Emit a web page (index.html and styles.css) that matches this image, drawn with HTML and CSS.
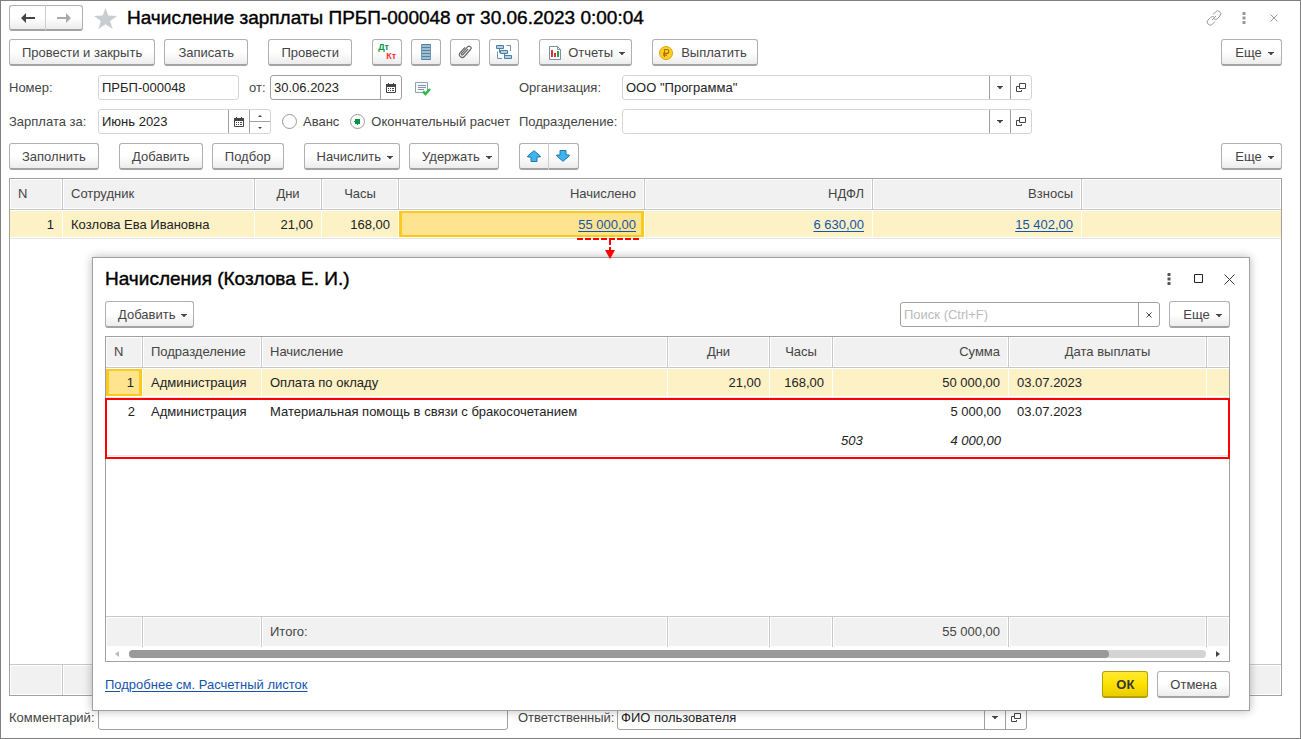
FILE: index.html
```html
<!DOCTYPE html>
<html lang="ru">
<head>
<meta charset="utf-8">
<title>Начисление зарплаты</title>
<link rel="stylesheet" href="styles.css">
</head>
<body>
<svg class="defs" aria-hidden="true">
  <symbol id="caret" viewBox="0 0 6 4"><path d="M0 0h6v1H5L3.500 3h-1L1 1H0z" fill="#444"/></symbol>
  <symbol id="open" viewBox="0 0 10 10"><path d="M3.500.5h6v5h-6zM3 3.500H.5v5h5V7" fill="none" stroke="#444"/></symbol>
  <symbol id="calendar" viewBox="0 0 10 10"><path d="M.5 1.500h9v8h-9z" fill="#fff" stroke="#444"/><path d="M0 1h10v3H0zM2 0h1v2H2zM7 0h1v2H7zM2 5h1v1H2zM4 5h1v1H4zM6 5h2v1H6zM2 7h1v1H2zM4 7h1v1H4zM6 7h2v1H6z" fill="#444"/></symbol>
  <symbol id="dots" viewBox="0 0 4 12"><path d="M.5 0h3v3h-3zM.5 4.500h3v3h-3zM.5 9h3v3h-3z" fill="currentColor"/></symbol>
</svg>

<main class="page">
  <header class="titlebar">
    <div class="pair">
      <button class="btn" aria-label="Назад"><svg width="14" height="10" viewBox="0 0 14 10"><path d="M5 0v4h9v2H5v4L0 5z" fill="#444"/></svg></button>
      <button class="btn" aria-label="Вперед"><svg width="14" height="10" viewBox="0 0 14 10"><path d="M9 0v4H0v2h9v4l5-5z" fill="#aaa"/></svg></button>
    </div>
    <svg class="star" width="23" height="21" viewBox="0 0 23 21"><path d="M11.500 0l2.800 7.600 8.700.3-6.900 5 2.600 8.100-7.200-4.800L4.300 21l2.600-8.100L0 7.900l8.700-.3z" fill="#c9ccd0"/></svg>
    <h1 class="title">Начисление зарплаты ПРБП-000048 от 30.06.2023 0:00:04</h1>
    <div class="winctl muted">
      <button class="plain link" aria-label="Ссылка"><svg width="16" height="16" viewBox="0 0 16 16" fill="none" stroke="#999"><path d="M7 4.500l2.500-2.600a2.900 2.900 0 0 1 4.500 4L11.500 8.600 9.800 9.500 8 9M9 11.500l-2.500 2.600a2.900 2.900 0 0 1-4.500-4L4.500 7.400 6.200 6.500 8 7M6 10l4-4"/></svg></button>
      <button class="plain" aria-label="Меню"><svg width="4" height="12"><use href="#dots"/></svg></button>
      <button class="plain" aria-label="Закрыть"><svg width="8" height="8" viewBox="0 0 8 8"><path d="M.5.5l7 7m0-7l-7 7" stroke="#999"/></svg></button>
    </div>
  </header>

  <div class="toolbar">
    <div class="group"><button class="btn">Провести и закрыть</button><button class="btn wide">Записать</button></div>
    <button class="btn wide">Провести</button>
    <div class="group">
      <button class="btn icon" aria-label="Проводки"><span class="dtkt"><span class="dt">Дт</span><span class="kt">Кт</span></span></button>
      <button class="btn icon" aria-label="Список"><svg width="12" height="16" viewBox="0 0 12 16"><path d="M1 0h10v16H1z" fill="#9dbdd2"/><path d="M1 .5h10M1 3.500h10M1 6.500h10M1 9.500h10M1 12.500h10M1 15.500h10" stroke="#54819f"/><path d="M1.500 0v16M10.500 0v16" stroke="#6f98b2"/></svg></button>
      <button class="btn icon" aria-label="Файлы"><svg width="14" height="14" viewBox="0 0 14 14" fill="none" stroke="#666" stroke-width="1.200"><path d="M10 4L5 9.500c-.9 1-2.200-.1-1.300-1.200l5.800-6.400c1.800-1.900 4.800.3 3 2.600L6.400 11.500c-2.300 2.500-6.600-.4-4.400-3.600L7 2.300"/></svg></button>
      <button class="btn icon" aria-label="Структура"><svg width="16" height="16" viewBox="0 0 16 16"><path d="M10.500 1.500h4V7M1.500 7.500v7H6" fill="none" stroke="#6b93b0"/><path d="M3.500 5v3.500H5M8.500 10v3H10" fill="none" stroke="#4a7fa5"/><path d="M.5 1.500h7v3h-7zM4.500 6.500h7v3h-7zM8.500 11.500h7v3h-7z" fill="#b5d0e2" stroke="#4a7fa5"/></svg></button>
    </div>
    <button class="btn drop reports"><svg width="14" height="14" viewBox="0 0 14 14"><path d="M1.500.5h8l3 3v10h-11z" fill="#fff" stroke="#7d8fa3"/><path d="M9.500.5v3h3" fill="none" stroke="#7d8fa3"/><path d="M3 4h2v7H3z" fill="#d33"/><path d="M6 7h2v4H6z" fill="#d33"/><path d="M9 5h2v6H9z" fill="#2c9b49"/></svg><span>Отчеты</span><svg class="caret" width="6" height="4"><use href="#caret"/></svg></button>
    <button class="btn pay"><svg width="14" height="14" viewBox="0 0 14 14"><circle cx="7" cy="7" r="6.500" fill="#ffcf26" stroke="#dba408"/><path d="M5.500 11V3.500h2.300a1.900 1.900 0 0 1 0 3.900H4M4 9.200h4" fill="none" stroke="#a87500" stroke-width="1.200"/></svg><span>Выплатить</span></button>
    <button class="btn drop end"><span>Еще</span><svg class="caret" width="6" height="4"><use href="#caret"/></svg></button>
  </div>

  <div class="row">
    <div class="left">
      <label class="lbl" for="num">Номер:</label>
      <div class="field w-num"><input id="num" value="ПРБП-000048"></div>
      <label class="lbl-date" for="date">от:</label>
      <div class="field dark w-date"><input id="date" value="30.06.2023"><button aria-label="Календарь"><svg width="10" height="10"><use href="#calendar"/></svg></button></div>
      <svg class="note" width="16" height="14" viewBox="0 0 16 14"><path d="M.5.5h12v10H.5z" fill="#f4f8fb" stroke="#8da2b3"/><path d="M3 3.500h8M3 5.500h8M3 7.500h6" stroke="#8596a3"/><path d="M8 9.500l2.500 2.500L15 7" fill="none" stroke="#2fb944" stroke-width="2.500"/></svg>
    </div>
    <label class="lbl-right" for="org">Организация:</label>
    <div class="field w-ref"><input id="org" value='ООО "Программа"'><button aria-label="Выбрать"><svg width="6" height="4"><use href="#caret"/></svg></button><button aria-label="Открыть"><svg width="10" height="10"><use href="#open"/></svg></button></div>
  </div>

  <div class="row">
    <div class="left">
      <label class="lbl" for="month">Зарплата за:</label>
      <div class="field w-month"><input id="month" value="Июнь 2023"><button aria-label="Календарь"><svg width="10" height="10"><use href="#calendar"/></svg></button>
        <div class="spin"><button aria-label="Больше"><svg width="4" height="2" viewBox="0 0 4 2"><path d="M2 0l2 2H0z" fill="#444"/></svg></button><button aria-label="Меньше"><svg width="4" height="2" viewBox="0 0 4 2"><path d="M0 0h4L2 2z" fill="#444"/></svg></button></div></div>
      <label class="radio"><input type="radio" name="kind">Аванс</label>
      <label class="radio"><input type="radio" name="kind" checked>Окончательный расчет</label>
    </div>
    <label class="lbl-right" for="dep">Подразделение:</label>
    <div class="field w-ref"><input id="dep"><button aria-label="Выбрать"><svg width="6" height="4"><use href="#caret"/></svg></button><button aria-label="Открыть"><svg width="10" height="10"><use href="#open"/></svg></button></div>
  </div>

  <div class="toolbar">
    <button class="btn">Заполнить</button>
    <div class="group"><button class="btn wide">Добавить</button><button class="btn">Подбор</button></div>
    <div class="group"><button class="btn drop"><span>Начислить</span><svg class="caret" width="6" height="4"><use href="#caret"/></svg></button><button class="btn drop"><span>Удержать</span><svg class="caret" width="6" height="4"><use href="#caret"/></svg></button></div>
    <div class="pair arrows">
      <button class="btn" aria-label="Вверх"><svg width="14" height="12" viewBox="0 0 14 12"><path d="M7 .7L13.300 6v1H10v4.500H4V7H.7V6z" fill="#41b3ee" stroke="#2379a8"/></svg></button>
      <button class="btn" aria-label="Вниз"><svg width="14" height="12" viewBox="0 0 14 12"><path d="M7 11.300L.7 6V5H4V.5h6V5h3.300v1z" fill="#41b3ee" stroke="#2379a8"/></svg></button>
    </div>
    <button class="btn drop end"><span>Еще</span><svg class="caret" width="6" height="4"><use href="#caret"/></svg></button>
  </div>

  <div class="gridbox main-grid">
    <table>
      <colgroup><col class="m1"><col class="m2"><col class="m3"><col class="m4"><col class="m5"><col class="m6"><col class="m7"><col></colgroup>
      <thead><tr><th>N</th><th>Сотрудник</th><th class="c">Дни</th><th class="c">Часы</th><th class="r">Начислено</th><th class="r">НДФЛ</th><th class="r">Взносы</th><th></th></tr></thead>
      <tbody>
        <tr class="sel"><td class="r">1</td><td>Козлова Ева Ивановна</td><td class="r">21,00</td><td class="r">168,00</td>
          <td class="r cur"><a href="#accruals">55 000,00</a><svg class="pointer" width="62" height="22" viewBox="0 0 62 22"><path d="M0 1h62" stroke="#f00" stroke-width="2" stroke-dasharray="6 2"/><path d="M33 2v12" stroke="#f00" stroke-width="2" stroke-dasharray="5 2"/><path d="M28 12h10l-5 9z" fill="#f00"/></svg></td>
          <td class="r"><a href="#tax">6 630,00</a></td><td class="r"><a href="#fees">15 402,00</a></td><td></td></tr>
        <tr class="fill"><td colspan="8"></td></tr>
      </tbody>
      <tfoot><tr><td></td><td></td><td></td><td></td><td></td><td></td><td></td><td></td></tr></tfoot>
    </table>
  </div>

  <div class="row bottom">
    <div class="left">
      <label class="lbl" for="comment">Комментарий:</label>
      <div class="field dark w-comment"><input id="comment"></div>
    </div>
    <label class="lbl-resp" for="resp">Ответственный:</label>
    <div class="field dark w-ref"><input id="resp" value="ФИО пользователя"><button aria-label="Выбрать"><svg width="6" height="4"><use href="#caret"/></svg></button><button aria-label="Открыть"><svg width="10" height="10"><use href="#open"/></svg></button></div>
  </div>

  <section class="dialog" id="accruals" role="dialog" aria-labelledby="dlg-title">
    <header class="dlg-head">
      <h2 class="title" id="dlg-title">Начисления (Козлова Е. И.)</h2>
      <div class="winctl">
        <button class="plain" aria-label="Меню"><svg width="4" height="12"><use href="#dots"/></svg></button>
        <button class="plain" aria-label="Развернуть"><svg width="10" height="10" viewBox="0 0 10 10"><path d="M.5.5h8v8h-8z" fill="none" stroke="#222"/></svg></button>
        <button class="plain" aria-label="Закрыть"><svg width="11" height="11" viewBox="0 0 11 11"><path d="M.5.5l10 10m0-10l-10 10" stroke="#333"/></svg></button>
      </div>
    </header>
    <div class="toolbar dlg-tools">
      <button class="btn drop"><span>Добавить</span><svg class="caret" width="6" height="4"><use href="#caret"/></svg></button>
      <div class="group end">
        <div class="field dark search"><input type="text" aria-label="Поиск" placeholder="Поиск (Ctrl+F)"><button aria-label="Очистить"><svg width="6" height="6" viewBox="0 0 6 6"><path d="M.5.5l5 5m0-5l-5 5" stroke="#444"/></svg></button></div>
        <button class="btn drop"><span>Еще</span><svg class="caret" width="6" height="4"><use href="#caret"/></svg></button>
      </div>
    </div>
    <div class="gridbox dlg-grid">
      <table>
        <colgroup><col class="d1"><col class="d2"><col><col class="d4"><col class="d5"><col class="d6"><col class="d7"><col class="d8"></colgroup>
        <thead><tr><th>N</th><th>Подразделение</th><th>Начисление</th><th class="c">Дни</th><th class="c">Часы</th><th class="r">Сумма</th><th class="c">Дата выплаты</th><th></th></tr></thead>
        <tbody>
          <tr class="sel"><td class="r cur">1</td><td>Администрация</td><td>Оплата по окладу</td><td class="r">21,00</td><td class="r">168,00</td><td class="r">50 000,00</td><td>03.07.2023</td><td></td></tr>
          <tr class="top"><td class="r">2</td><td>Администрация</td><td>Материальная помощь в связи с бракосочетанием</td><td></td><td></td><td class="r">5 000,00</td><td>03.07.2023</td><td></td></tr>
          <tr class="sub"><td></td><td></td><td></td><td></td><td></td><td><div class="split"><span>503</span><span>4 000,00</span></div></td><td></td><td></td></tr>
          <tr class="fill"><td colspan="8"></td></tr>
        </tbody>
        <tfoot><tr><td></td><td></td><td>Итого:</td><td></td><td></td><td class="r">55 000,00</td><td></td><td></td></tr></tfoot>
      </table>
      <div class="scroll">
        <svg width="4" height="6" viewBox="0 0 4 6"><path d="M4 0v6L0 3z" fill="#bbb"/></svg>
        <div class="track"><div class="thumb"></div></div>
        <svg width="4" height="6" viewBox="0 0 4 6"><path d="M0 0v6l4-3z" fill="#444"/></svg>
      </div>
      <div class="frame"></div>
    </div>
    <footer class="dlg-foot">
      <a href="#slip">Подробнее см. Расчетный листок</a>
      <div class="group"><button class="btn ok">ОК</button><button class="btn">Отмена</button></div>
    </footer>
  </section>
</main>
</body>
</html>
```
FILE: styles.css
```css
* { box-sizing: border-box; }
body { margin: 0; font: 13px/16px "Liberation Sans", Arial, sans-serif; color: #444; background: #fff; }
.defs { display: none; }
button, input { font: inherit; color: inherit; margin: 0; }
svg { display: block; flex: none; }
a { color: #1553ad; text-decoration: underline; text-underline-offset: 2px; }

.page { position: relative; display: flex; flex-direction: column; min-height: 100vh; border: 1px solid #808080; padding: 4px 18px 8px 8px; }

.titlebar { display: flex; align-items: center; height: 26px; margin-bottom: 8px; }
.title { margin: 0; font-size: 19px; line-height: 24px; font-weight: 400; color: #000; -webkit-text-stroke: 0.4px #000; white-space: nowrap; }
.star { margin: 0 10px 0 11px; }
.winctl { display: flex; align-items: center; gap: 20px; margin-left: auto; color: #555; }
.muted { color: #999; padding-right: 3px; }
.plain { border: 0; background: none; padding: 0; display: flex; justify-content: center; min-width: 10px; }
.link { margin-right: -3px; }

.btn { display: inline-flex; align-items: center; justify-content: center; height: 27px; padding: 1px 12px 0; border: 1px solid #b0b0b0; border-bottom: 2px solid #a3a3a3; border-radius: 3px; background: linear-gradient(#fff 50%, #ececec); white-space: nowrap; }
.wide { min-width: 84px; }
.drop { padding: 1px 6px 0 12px; gap: 6px; min-width: 61px; }
.caret { margin-top: 2px; }
.icon { width: 30px; padding: 0; }
.reports { padding-left: 8px; }
.pay { padding: 1px 10px 0 6px; gap: 8px; }
.ok { min-width: 46px; color: #333; font-weight: 700; border-color: #b5a000; background: linear-gradient(#ffe934, #ffe100 50%, #e8cd00); }
.pair { display: flex; }
.pair .btn { width: 37px; padding: 0; height: 26px; }
.pair .btn:first-child { border-radius: 3px 0 0 3px; border-right-color: #ccc; }
.pair .btn:last-child { border-radius: 0 3px 3px 0; border-left: 0; }
.arrows .btn { width: 30px; height: 27px; }
.dtkt { display: flex; flex-direction: column; width: 18px; font-size: 9px; line-height: 9px; font-weight: 700; }
.dt { text-align: left; color: #009646; }
.kt { text-align: right; color: #e33; }

.toolbar { display: flex; align-items: center; gap: 20px; }
.group { display: flex; align-items: center; gap: 9px; }
.end { margin-left: auto; }

.row { display: flex; align-items: center; margin-top: 9px; }
.row + .toolbar { margin-top: 9px; }
.left { display: flex; align-items: center; width: 510px; flex: none; }
.lbl { width: 89px; flex: none; }
.lbl-date { width: 31px; padding-left: 10px; }
.lbl-right { width: 103px; flex: none; }
.lbl-resp { width: 99px; flex: none; }
.field { display: flex; height: 25px; border: 1px solid #d4d4d4; border-radius: 3px; background: #fff; overflow: hidden; color: #222; }
.field input { flex: 1; min-width: 0; border: 0; outline: 0; padding: 0 3px; background: none; }
.field button { flex: none; display: flex; align-items: center; justify-content: center; width: 21px; padding: 0; border: 0; border-left: 1px solid #a0a0a0; background: none; }
.dark { border-color: #a0a0a0; }
.w-num { width: 141px; }
.w-date { width: 132px; }
.w-month { width: 173px; }
.w-ref { flex: 0 1 410px; }
.w-comment { width: 410px; }
.note { margin-left: 13px; margin-top: 3px; }
.spin { display: flex; flex-direction: column; }
.field .spin button { flex: 1; }
.spin button + button { border-top: 1px solid #a0a0a0; }
.radio { display: flex; align-items: center; margin-left: 11px; white-space: nowrap; }
.radio input { appearance: none; width: 15px; height: 15px; margin: 0 6px 0 0; border: 1px solid #999; border-radius: 50%; }
.radio input:checked { background: radial-gradient(circle, #009646 3px, #fff 3px); }

.gridbox { position: relative; display: grid; border: 1px solid #a0a0a0; }
.main-grid { flex: 1; margin-top: 8px; }
table { width: 100%; height: 100%; table-layout: fixed; border-collapse: separate; border-spacing: 0; }
th, td { padding: 0 8px; font-weight: 400; text-align: left; white-space: nowrap; }
th, tfoot td { background: #f1f1f1; border-right: 1px solid #c8c8c8; box-shadow: inset 0 0 0 1px #fff; height: 31px; }
th { border-bottom: 1px solid #c8c8c8; }
tfoot td { border-top: 1px solid #c8c8c8; }
th:last-child, tfoot td:last-child { border-right: 0; }
.c { text-align: center; }
.r { text-align: right; }
.sel td { height: 29px; color: #222; background: #fdf1c6; border-right: 1px solid #fff; border-bottom: 1px solid #e4e4e4; box-shadow: inset 0 1px #fff, inset 0 -1px #fff; }
.main-grid .sel td { padding-top: 2px; }
.sel td:last-child { border-right: 0; }
.sel .cur { position: relative; background: #ffe48f; box-shadow: inset 0 1px #fff, inset 0 -1px #fff, inset 0 0 0 3px #fcc91c; }
.fill td { padding: 0; }
.m1 { width: 53px; } .m2 { width: 192px; } .m3 { width: 67px; } .m4 { width: 77px; } .m5 { width: 246px; } .m6 { width: 228px; } .m7 { width: 209px; }
.pointer { position: absolute; right: 5px; top: 28px; z-index: 3; }
.bottom { margin-top: 9px; }
.bottom .left { width: 509px; }

.dialog { position: absolute; top: 256px; right: 50px; bottom: 27px; left: 91px; z-index: 2; display: flex; flex-direction: column; padding: 8px 19px 12px 12px; background: #fff; border: 1px solid #a0a0a0; box-shadow: 0 0 9px rgba(0, 0, 0, .28); }
.dlg-head { display: flex; align-items: center; height: 26px; }
.dlg-head .winctl { margin-right: -5px; }
.dlg-tools { margin-top: 9px; }
.search { width: 260px; }
.search input::placeholder { color: #bbb; opacity: 1; }
.dlg-grid { flex: 1; margin-top: 8px; grid-template-rows: 1fr auto; }
.d1 { width: 37px; } .d2 { width: 119px; } .d4 { width: 102px; } .d5 { width: 63px; } .d6 { width: 176px; } .d7 { width: 198px; } .d8 { width: 22px; }
.dlg-grid .sel td { height: 30px; }
.top td { height: 29px; padding-bottom: 2px; color: #222; }
.sub td { height: 29px; color: #222; font-style: italic; border-bottom: 1px solid #e4e4e4; }
.split { display: flex; justify-content: space-between; }
.scroll { display: flex; align-items: center; gap: 10px; height: 14px; padding: 0 9px; }
.track { flex: 1; height: 8px; border-radius: 4px; background: #d4d4d4; }
.thumb { width: 91%; height: 8px; border-radius: 4px; background: #999; }
.frame { position: absolute; top: 61px; left: -1px; right: -1px; height: 61px; border: 2px solid #f00; pointer-events: none; }
.dlg-foot { display: flex; align-items: center; justify-content: space-between; margin-top: 9px; }
```
